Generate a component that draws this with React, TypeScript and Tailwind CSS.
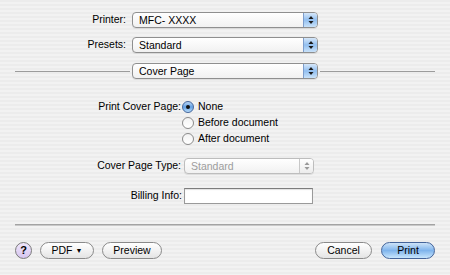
import React from 'react';

const Arrows = ({ disabled }: { disabled?: boolean }) => (
  <svg width="6" height="10" viewBox="0 0 6 10">
    <path d="M3 1 L5.5 4 L0.5 4 Z" fill={disabled ? '#9a9a9a' : '#1a1a1a'} />
    <path d="M3 9 L5.5 6 L0.5 6 Z" fill={disabled ? '#9a9a9a' : '#1a1a1a'} />
  </svg>
);

const Popup = ({ value, width = 'w-[186px]', disabled }: { value: string; width?: string; disabled?: boolean }) => (
  <div
    className={`flex h-[16px] ${width} items-center overflow-hidden rounded-[4px] border ${
      disabled ? 'border-[#bdbdbd] text-[#9d9d9d]' : 'border-[#8f8f8f] text-black'
    } bg-gradient-to-b from-white to-[#f1f1f1] shadow-[0_1px_0_rgba(0,0,0,0.08)]`}
  >
    <span className="flex-1 pl-[6px] leading-none">{value}</span>
    <div
      className={`flex h-full w-[14px] items-center justify-center border-l ${
        disabled
          ? 'border-[#c8c8c8] bg-gradient-to-b from-white to-[#ececec]'
          : 'border-[#7d9dcc] bg-gradient-to-b from-[#d6e7f9] via-[#92bff0] to-[#c9e2f9]'
      }`}
    >
      <Arrows disabled={disabled} />
    </div>
  </div>
);

const Radio = ({ checked, label }: { checked?: boolean; label: string }) => (
  <div className="flex h-[16px] items-center gap-[4px]">
    <div
      className={`flex h-[12px] w-[12px] items-center justify-center rounded-full border ${
        checked
          ? 'border-[#45679c] bg-gradient-to-b from-[#b9d6f5] via-[#62a0e4] to-[#b7dbf9]'
          : 'border-[#8b8b8b] bg-gradient-to-b from-[#f3f3f3] to-white'
      }`}
    >
      {checked && <div className="h-[4px] w-[4px] rounded-full bg-[#111]" />}
    </div>
    <span>{label}</span>
  </div>
);

const Button = ({ children, width, primary }: { children: React.ReactNode; width: string; primary?: boolean }) => (
  <div
    className={`flex h-[17px] ${width} items-center justify-center rounded-full border ${
      primary
        ? 'border-[#44649a] bg-gradient-to-b from-[#cde3f8] via-[#7fb4ec] to-[#c8e6fc]'
        : 'border-[#8a8a8a] bg-gradient-to-b from-white via-[#f2f2f2] to-[#e4e4e4]'
    } leading-none`}
  >
    {children}
  </div>
);

export default function App() {
  return (
    <div className="flex h-[275px] w-[450px] flex-col bg-[repeating-linear-gradient(to_bottom,#ececec_0px,#ececec_2px,#f2f2f2_2px,#f2f2f2_4px)] font-['Liberation_Sans',Arial,sans-serif] text-[10.5px] text-black">
      <div className="mt-[12px] flex items-center">
        <span className="w-[126px] text-right">Printer:</span>
        <div className="ml-[6px]">
          <Popup value="MFC- XXXX" />
        </div>
      </div>
      <div className="mt-[9px] flex items-center">
        <span className="w-[126px] text-right">Presets:</span>
        <div className="ml-[6px]">
          <Popup value="Standard" />
        </div>
      </div>
      <div className="mt-[10px] flex items-center">
        <div className="ml-[15px] h-px w-[115px] bg-[#9c9c9c]" />
        <div className="ml-[2px]">
          <Popup value="Cover Page" />
        </div>
        <div className="ml-[2px] h-px w-[115px] bg-[#9c9c9c]" />
      </div>

      <div className="mt-[20px] flex">
        <span className="flex h-[16px] w-[181px] items-center justify-end">Print Cover Page:</span>
        <div className="ml-[1px] flex flex-col">
          <Radio checked label="None" />
          <Radio label="Before document" />
          <Radio label="After document" />
        </div>
      </div>

      <div className="mt-[11px] flex items-center">
        <span className="w-[181px] text-right">Cover Page Type:</span>
        <div className="ml-[3px]">
          <Popup value="Standard" width="w-[130px]" disabled />
        </div>
      </div>

      <div className="mt-[14px] flex items-center">
        <span className="w-[182px] text-right">Billing Info:</span>
        <div className="ml-[2px] h-[16px] w-[129px] border border-[#9a9a9a] border-t-[#7d7d7d] bg-white shadow-[inset_0_1px_1px_rgba(0,0,0,0.12)]" />
      </div>

      <div className="mx-[15px] mt-[20px] h-[2px] border-t border-[#a3a3a3] border-b-[#f8f8f8] bg-[#c8c8c8]" />

      <div className="mx-[15px] mt-[16px] flex items-center">
        <div className="flex h-[17px] w-[17px] items-center justify-center rounded-full border border-[#7a7a7a] bg-gradient-to-b from-[#efe6fb] to-[#d6c5ef] text-[11px] font-bold leading-none">
          ?
        </div>
        <div className="ml-[8px]">
          <Button width="w-[54px]">
            PDF <span className="ml-[3px] text-[7px]">▼</span>
          </Button>
        </div>
        <div className="ml-[8px]">
          <Button width="w-[60px]">Preview</Button>
        </div>
        <div className="ml-auto">
          <Button width="w-[57px]">Cancel</Button>
        </div>
        <div className="ml-[9px]">
          <Button width="w-[54px]" primary>
            Print
          </Button>
        </div>
      </div>
    </div>
  );
}
